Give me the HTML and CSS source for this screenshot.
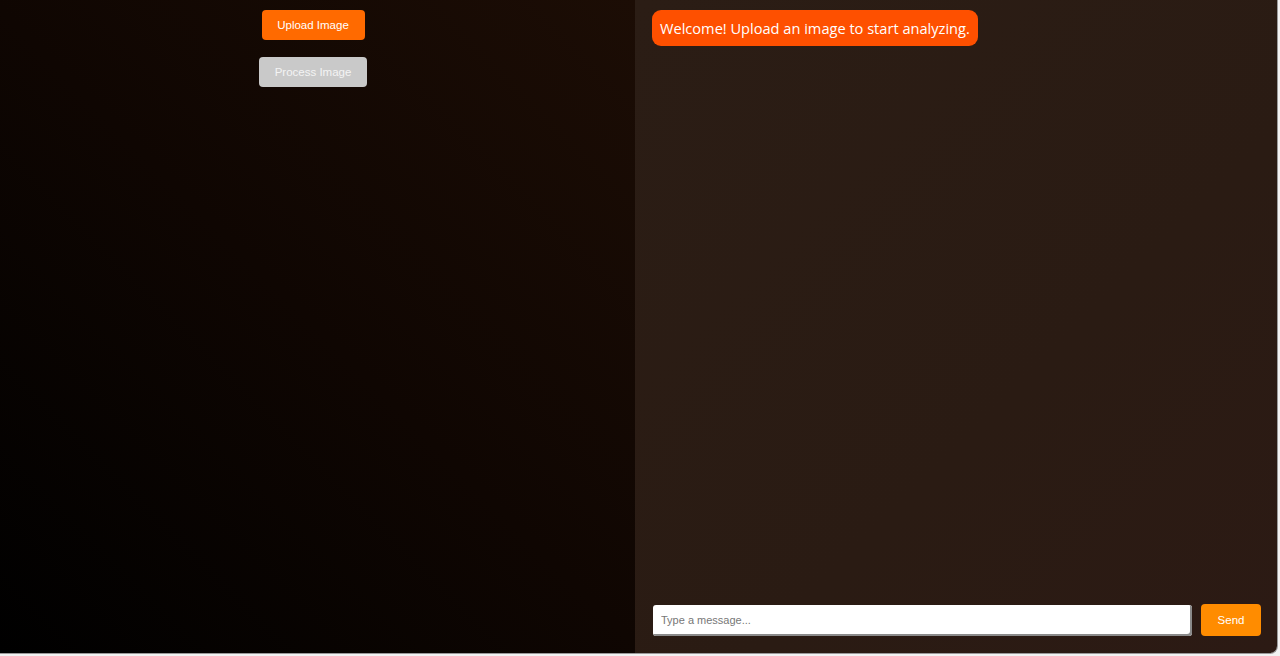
FILE: index.html
```html
<!DOCTYPE html>
<html lang="en">
<head>
<meta charset="utf-8">
<title>Image Analyzer</title>
<link rel="stylesheet" href="styles.css">
</head>
<body>
<div class="app">
  <section class="left-panel">
    <button class="btn btn-upload">Upload Image</button>
    <button class="btn btn-process">Process Image</button>
  </section>
  <section class="right-panel">
    <div class="messages">
      <div class="bubble">Welcome! Upload an image to start analyzing.</div>
    </div>
    <div class="input-row">
      <input class="msg-input" type="text" placeholder="Type a message...">
      <button class="btn btn-send">Send</button>
    </div>
  </section>
</div>
</body>
</html>
```

FILE: styles.css
```css
html, body {
  margin: 0;
  padding: 0;
  height: 100%;
  background: #f2f2f2;
  font-family: "Liberation Sans", Arial, sans-serif;
}

.app {
  display: flex;
  width: 1277px;
  height: 653px;
  border-right: 1px solid #9a9a9a;
  border-bottom: 1px solid #9a9a9a;
  border-bottom-right-radius: 8px;
  overflow: hidden;
  box-sizing: content-box;
}

.left-panel {
  flex: 0 0 626px;
  padding-right: 9px;
  display: flex;
  flex-direction: column;
  align-items: center;
  padding-top: 10px;
  gap: 17px;
  background: linear-gradient(45deg, #000000 0%, #0f0602 50%, #1c0d05 100%);
}

.btn {
  border: none;
  font-family: "Liberation Sans", Arial, sans-serif;
  font-size: 11.5px;
  color: #ffffff;
  border-radius: 4px;
  height: 30px;
  cursor: pointer;
}

.btn-upload {
  width: 103px;
  background: #ff6a00;
}

.btn-process {
  width: 108px;
  background: #c9c9c9;
  color: #f4f4f4;
}

.right-panel {
  flex: 1;
  display: flex;
  flex-direction: column;
  padding: 10px 16px 17px 17px;
  background: linear-gradient(135deg, #2b1d15 0%, #2a1b13 60%, #2c1a14 100%);
}

.messages {
  flex: 1;
  display: flex;
  flex-direction: column;
  align-items: flex-start;
}

.bubble {
  background: #fe5000;
  color: #ffffff;
  font-family: "Open Sans", sans-serif;
  font-size: 14.6px;
  padding: 8px 8px;
  line-height: 20px;
  border-radius: 9px;
}

.input-row {
  display: flex;
  gap: 9px;
  align-items: center;
}

.msg-input {
  flex: 1;
  height: 31px;
  box-sizing: border-box;
  border: none;
  border-radius: 3px;
  margin-left: 1px;
  padding: 0 8px;
  font-family: "Liberation Sans", Arial, sans-serif;
  font-size: 11px;
  background: #ffffff;
  box-shadow: inset -2px -2px 0 #8a8a8a;
  outline: none;
}

.msg-input::placeholder {
  color: #777777;
}

.btn-send {
  width: 60px;
  height: 32px;
  background: #ff8c00;
}
```
